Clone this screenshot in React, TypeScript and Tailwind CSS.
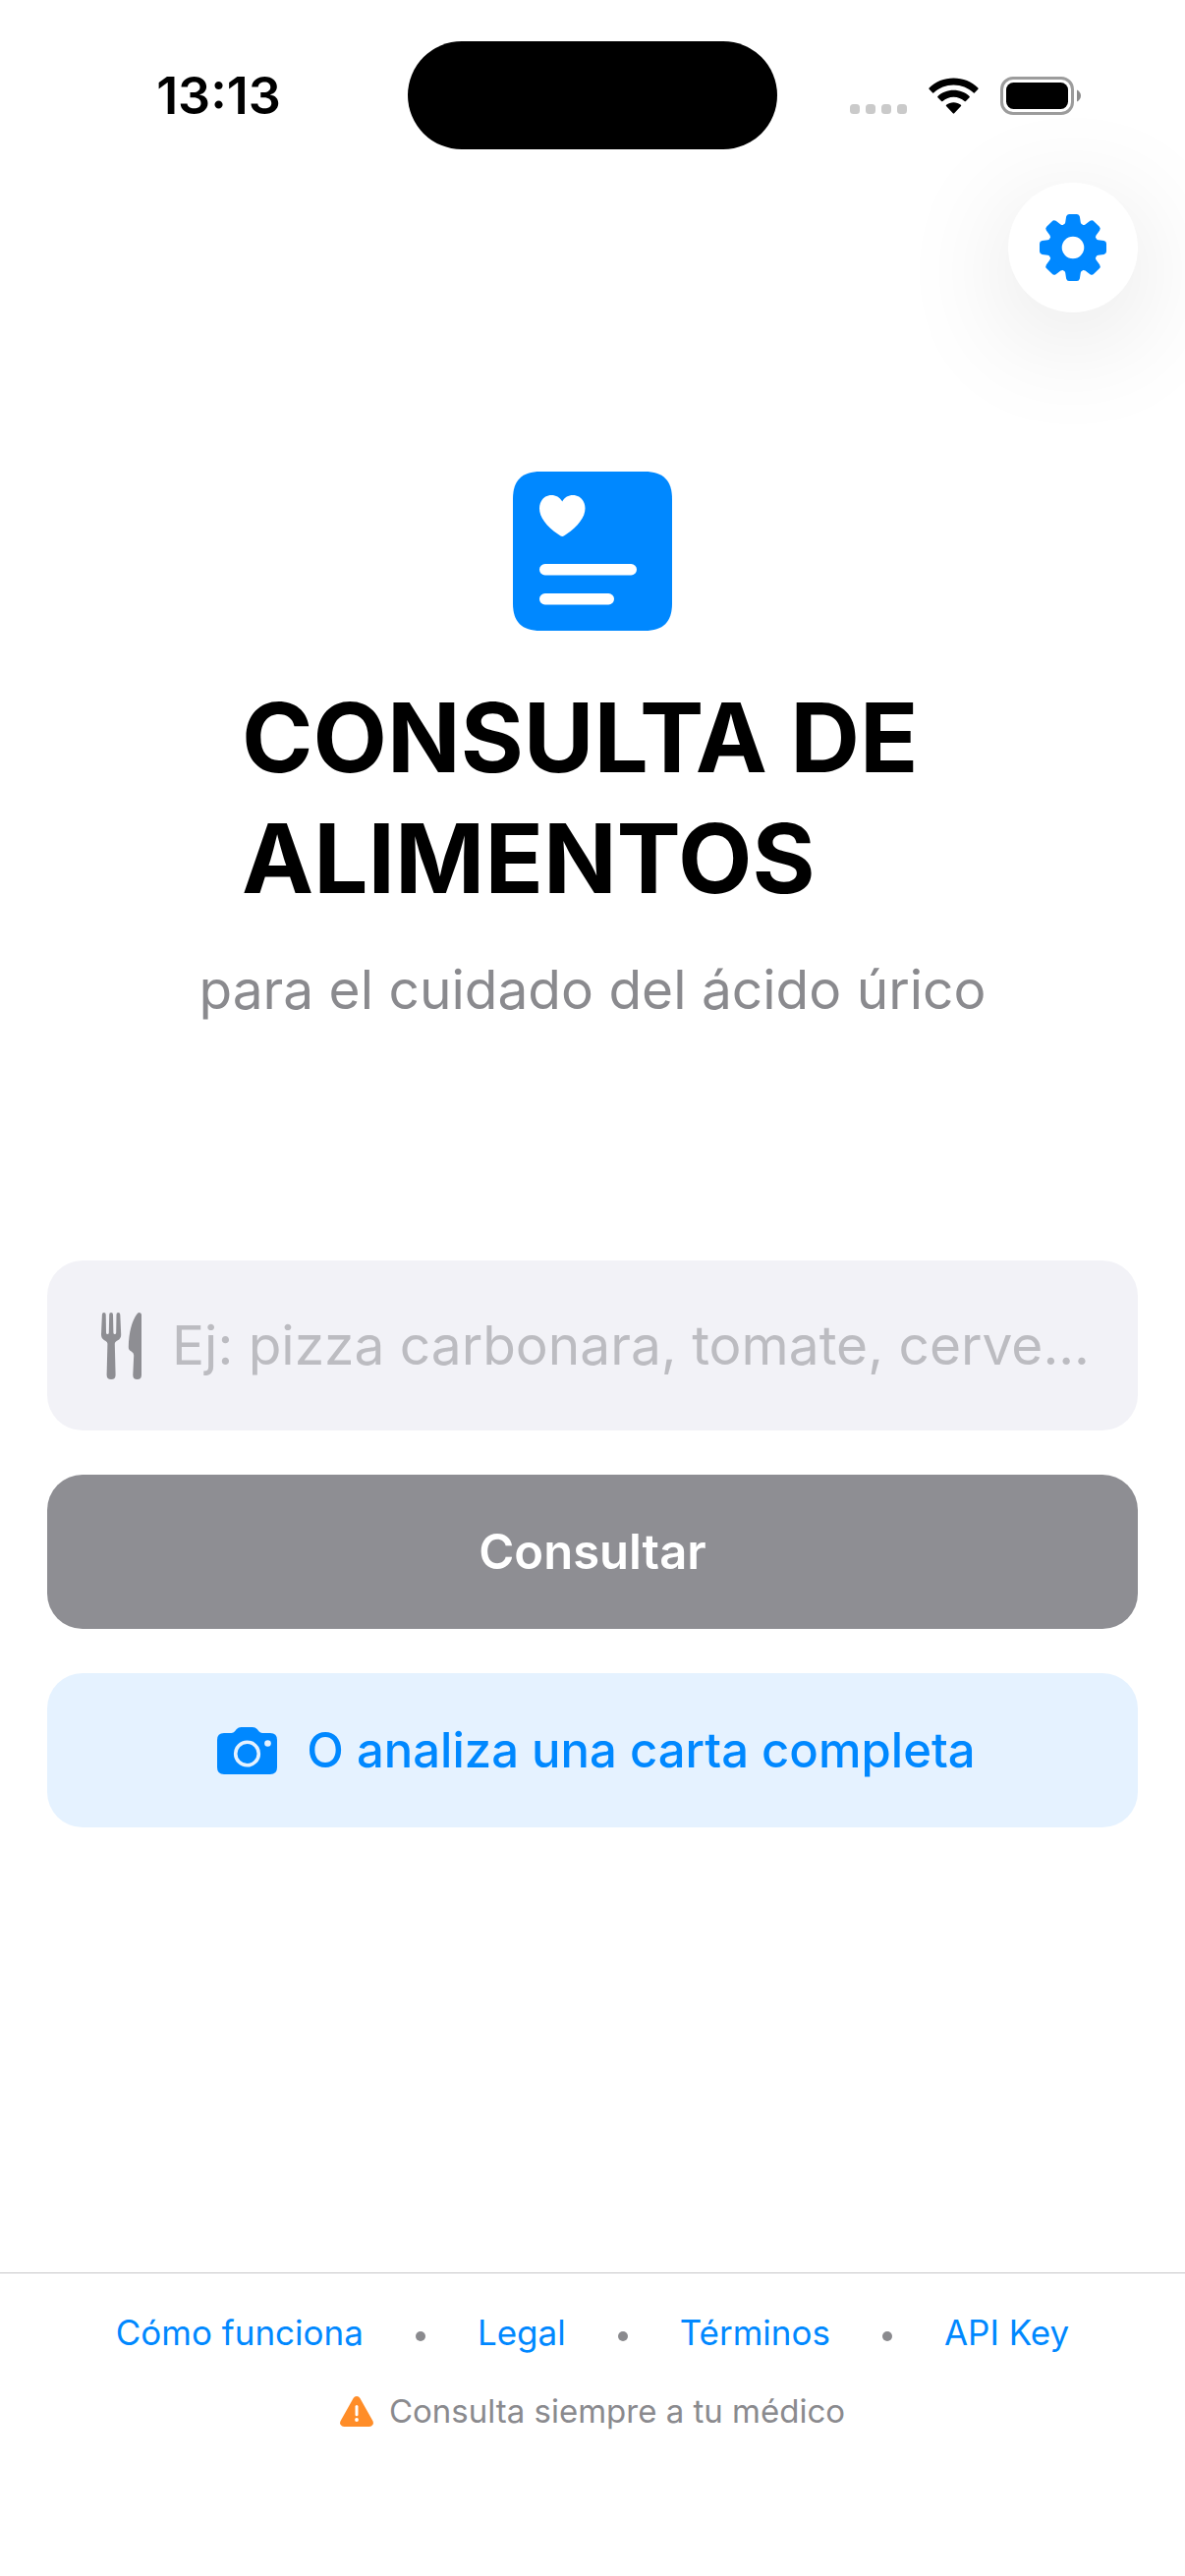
import React from "react";

const TOOTH =
  "M-10 -23 Q-8.2 -23.6 -7.8 -25.5 L-6.9 -31.5 Q-6.3 -34 -4 -34 H4 Q6.3 -34 6.9 -31.5 L7.8 -25.5 Q8.2 -23.6 10 -23 Z";
const ANGLES = [0, 45, 90, 135, 180, 225, 270, 315];

function GearIcon() {
  return (
    <svg viewBox="-34 -34 68 68" className="size-[68px]" fill="currentColor" aria-hidden="true">
      <circle r="18.2" fill="none" stroke="currentColor" strokeWidth="13.8" />
      {ANGLES.map((a) => (
        <path key={a} d={TOOTH} transform={`rotate(${a})`} />
      ))}
    </svg>
  );
}

function SignalDots() {
  return (
    <svg viewBox="0 0 58 10" className="h-[10px] w-[58px]" fill="#cacaca" aria-hidden="true">
      {[0, 16, 32, 48].map((x) => (
        <rect key={x} x={x} width="10" height="10" rx="3.5" />
      ))}
    </svg>
  );
}

function WifiIcon() {
  return (
    <svg viewBox="0 0 51 37" className="h-[37px] w-[51px]" aria-hidden="true">
      <path
        d="M25.5 0.5C35.2 0.5 44 4.2 50.4 10.4Q51 11.1 50.4 11.7L46.8 15.4Q46.2 16 45.5 15.3C40.3 10.4 33.2 7.5 25.5 7.5S10.7 10.4 5.5 15.3Q4.8 16 4.2 15.4L0.6 11.7Q0 11.1 0.6 10.4C7 4.2 15.8 0.5 25.5 0.5Z"
      />
      <path
        d="M25.5 12.8C31.8 12.8 37.4 15.1 41.6 19Q42.2 19.7 41.6 20.3L37.9 24.1Q37.2 24.6 36.6 24.1C33.6 21.4 29.7 19.8 25.5 19.8S17.4 21.4 14.4 24.1Q13.8 24.6 13.1 24.1L9.4 20.3Q8.8 19.7 9.4 19C13.6 15.1 19.2 12.8 25.5 12.8Z"
      />
      <path d="M25.5 25.2C28.2 25.2 30.8 26.1 32.9 27.7Q33.6 28.3 33 28.9L26.2 36.3Q25.5 37 24.8 36.3L18 28.9Q17.4 28.3 18.1 27.7C20.2 26.1 22.8 25.2 25.5 25.2Z" />
    </svg>
  );
}

function BatteryIcon() {
  return (
    <svg viewBox="0 0 82 39" className="h-[39px] w-[82px]" aria-hidden="true">
      <rect x="1.5" y="1.5" width="72" height="36" rx="11.5" fill="none" stroke="#9c9c9c" strokeWidth="3" />
      <rect x="6" y="6" width="63" height="27" rx="7.5" />
      <path d="M78 13.5C80.4 14.6 82 16.9 82 19.5S80.4 24.4 78 25.5Z" fill="#8c8c8c" />
    </svg>
  );
}

function LogoIcon() {
  return (
    <svg viewBox="0 0 162 162" className="size-[162px]" fill="white" aria-hidden="true">
      <path
        d="M28 0H134C153 0 162 9 162 28V134C162 153 153 162 134 162H28C9 162 0 153 0 134V28C0 9 9 0 28 0Z"
        fill="#0088ff"
      />
      <path d="M50.2 66Q49 66 46 63.8C34 55.5 27 46.3 27 37.5C27 29.6 32.2 24 39.3 24C43.9 24 48.1 26.4 50.2 30.5C52.3 26.4 56.3 24 61 24C68.2 24 73.5 29.6 73.5 37.5C73.5 46.3 66.4 55.5 54.4 63.8Q51.4 66 50.2 66Z" />
      <rect x="27" y="94" width="99" height="11.4" rx="5.7" />
      <rect x="27" y="124" width="76" height="11.4" rx="5.7" />
    </svg>
  );
}

function UtensilsIcon() {
  return (
    <svg viewBox="0 0 42 68" className="h-[68px] w-[42px] shrink-0" fill="#8e8e93" aria-hidden="true">
      <path d="M0.9 2Q1 0 2.8 0Q4.7 0 4.7 2L5 20.5Q5.1 22 6.4 22Q7.7 22 7.8 20.5L8.2 2Q8.2 0 10.1 0Q12 0 12 2L12.4 20.5Q12.5 22 13.8 22Q15.1 22 15.2 20.5L15.5 2Q15.5 0 17.4 0Q19.2 0 19.3 2L20.2 22C20.4 26 18.2 27.8 15.6 29Q13.7 30 13.8 32L14.6 63.5Q14.6 68 10.1 68Q5.6 68 5.6 63.5L6.4 32Q6.5 30 4.6 29C2 27.8 -0.2 26 0 22Z" />
      <path d="M38.4 0Q41 0 41 2.6V63.5Q41 68 36.7 68Q32.2 68 32.3 63.5L33.2 43.5Q33.2 41 30.6 39.6Q27.7 38.2 27.8 35C28.2 19.5 31.3 8.8 36.2 1.7Q37.3 0 38.4 0Z" />
    </svg>
  );
}

function CameraIcon() {
  return (
    <svg viewBox="0 0 61 48" className="h-[48px] w-[61px]" aria-hidden="true">
      <path
        d="M7 6H14.5Q16.5 6 18 4.2L19.8 2Q21.6 0 24.5 0H36Q38.9 0 40.7 2L42.5 4.2Q44 6 46 6H54Q61 6 61 13V41Q61 48 54 48H7Q0 48 0 41V13Q0 6 7 6Z"
        fill="#0088ff"
      />
      <circle cx="30.5" cy="27" r="11.8" fill="none" stroke="#e5f2ff" strokeWidth="3.6" />
      <circle cx="51.5" cy="16.5" r="3.3" fill="#e5f2ff" />
    </svg>
  );
}

function WarningIcon() {
  return (
    <svg viewBox="0 0 34 31" className="h-[31px] w-[34px]" aria-hidden="true">
      <path
        d="M13.6 2Q14.8 0 17 0Q19.2 0 20.4 2L33.3 25Q34.4 27.2 33.4 29Q32.2 31 29.8 31H4.2Q1.8 31 0.6 29Q-0.4 27.2 0.7 25Z"
        fill="#ff8d28"
      />
      <path d="M17 10.4V18.8" stroke="white" strokeWidth="3" strokeLinecap="round" />
      <circle cx="17" cy="24" r="1.9" fill="white" />
    </svg>
  );
}

function Dot() {
  return <span className="mt-2 size-[10px] rounded-full bg-[#8a8a8e]" />;
}

const LINKS = ["Cómo funciona", "Legal", "Términos", "API Key"];

export default function App() {
  return (
    <div className="flex min-h-screen flex-col bg-white font-['Inter','Liberation_Sans',sans-serif] text-black">
      <header className="grid h-[152px] grid-cols-[1fr_auto_1fr] items-end">
        <div className="flex h-[110px] items-center justify-center pt-[2px] pl-[30px]">
          <time className="text-[52px] leading-[60px] font-semibold">13:13</time>
        </div>
        <div className="h-[110px] w-[376px] rounded-full bg-black" />
        <div className="flex h-[110px] items-center justify-end gap-[22px] pr-[106px]">
          <span className="mt-[28px]">
            <SignalDots />
          </span>
          <WifiIcon />
          <BatteryIcon />
        </div>
      </header>

      <div className="flex justify-end px-12 pt-[34px]">
        <button
          type="button"
          aria-label="Ajustes"
          className="flex size-[132px] items-center justify-center rounded-full bg-white text-[#0088ff] shadow-[0_24px_120px_rgba(0,0,0,0.12)]"
        >
          <GearIcon />
        </button>
      </div>

      <main className="flex flex-1 flex-col items-center px-12 pt-[162px]">
        <LogoIcon />
        <h1 className="mt-[47px] w-full max-w-[714px] text-[98px] leading-[123px] font-bold">
          CONSULTA DE ALIMENTOS
        </h1>
        <p className="mt-[36px] text-[55px] leading-[72px] text-[#8a8a8e]">para el cuidado del ácido úrico</p>

        <form className="mt-[240px] flex w-full flex-col gap-[45px]" onSubmit={(e) => e.preventDefault()}>
          <label className="flex h-[173px] items-center gap-[30px] rounded-[36px] bg-[#f2f2f7] pr-[48px] pl-[55px]">
            <UtensilsIcon />
            <input
              type="text"
              aria-label="Alimento"
              placeholder="Ej: pizza carbonara, tomate, cerve..."
              className="h-[80px] min-w-0 flex-1 bg-transparent text-[55px] outline-none placeholder:text-[#bcbcc1]"
            />
          </label>
          <button
            type="submit"
            className="h-[157px] rounded-[36px] bg-[#8e8e93] text-[49px] leading-[60px] font-semibold text-white"
          >
            Consultar
          </button>
          <button
            type="button"
            className="flex h-[157px] items-center justify-center gap-[30px] rounded-[36px] bg-[#e5f2ff] pl-2 text-[49px] leading-[60px] font-medium text-[#0088ff]"
          >
            <CameraIcon />
            O analiza una carta completa
          </button>
        </form>
      </main>

      <footer className="flex h-[309px] flex-col items-center border-t border-[#c6c6c8] pt-[36px]">
        <nav className="flex items-center gap-[53px] text-[35px] leading-[48px] text-[#0088ff]">
          {LINKS.map((label, i) => (
            <React.Fragment key={label}>
              {i > 0 && <Dot />}
              <a href="#">{label}</a>
            </React.Fragment>
          ))}
        </nav>
        <p className="mt-[35px] flex items-center gap-[16px] text-[33px] leading-[42px] text-[#8a8a8e]">
          <WarningIcon />
          Consulta siempre a tu médico
        </p>
      </footer>
    </div>
  );
}
